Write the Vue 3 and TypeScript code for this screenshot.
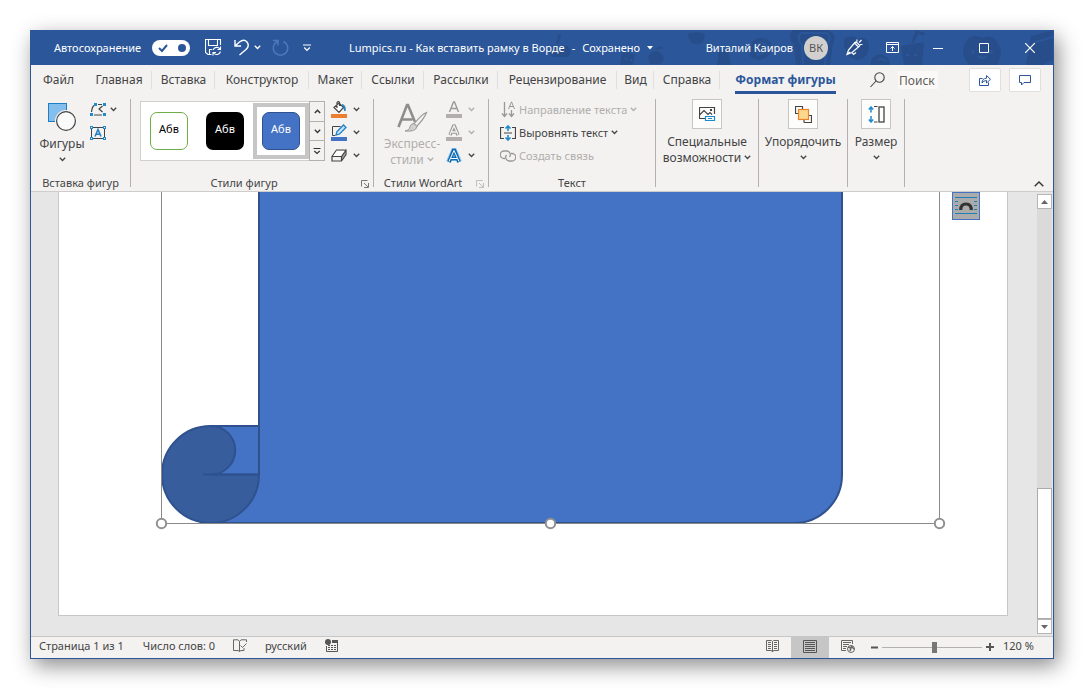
<script setup lang="ts">
import { h, ref } from 'vue'

interface Tab { id: string; label: string }

const tabs: Tab[] = [
  { id: 'file', label: 'Файл' },
  { id: 'home', label: 'Главная' },
  { id: 'insert', label: 'Вставка' },
  { id: 'design', label: 'Конструктор' },
  { id: 'layout', label: 'Макет' },
  { id: 'refs', label: 'Ссылки' },
  { id: 'mail', label: 'Рассылки' },
  { id: 'review', label: 'Рецензирование' },
  { id: 'view', label: 'Вид' },
  { id: 'help', label: 'Справка' },
  { id: 'format', label: 'Формат фигуры' },
]
const activeTab = ref('format')
const autosave = ref(true)
const query = ref('')
const zoom = ref(120)
const slider = ref(53)
const presets = ['outline', 'black', 'blue']
const preset = ref('blue')

const Chevron = () =>
  h('svg', { class: 'chev', width: 7, height: 5, viewBox: '0 0 7 5', 'aria-hidden': 'true' }, [
    h('path', { d: 'M0.8 0.8 L3.5 3.5 L6.2 0.8', fill: 'none', stroke: 'currentColor', 'stroke-width': 1.3 }),
  ])
const Launcher = () =>
  h('svg', { width: 8, height: 8, viewBox: '0 0 8 8', 'aria-hidden': 'true' }, [
    h('path', { d: 'M0.5 6.5 V0.5 H6.5 M3 3 L7 7 M7.5 3 V7.5 H3', fill: 'none', stroke: 'currentColor' }),
  ])
</script>

<template>
  <div class="stage">
    <main class="window">
      <header class="titlebar">
        <svg class="pattern" width="514" height="35" viewBox="540 30 514 35" aria-hidden="true">
          <g fill="#274e8b">
            <path d="M551 47 q5 -4 9 0 q5 -3 10 0 q3 6 -1 10 h-16 q-4 -5 -2 -10z M557 44 l2 -10 3 1 -2 9z" />
            <path d="M623 52 l13 2 -2 11 h-13z M652 53 q6 -5 11 1 q5 7 -3 10 h-8 q-5 -6 0 -11z M656 50 q3 -6 9 -2z" />
            <path d="M688 34 q9 -4 18 0 l-2 9 q-10 3 -13 -2z" />
            <path d="M753 42 q10 -9 19 1 q4 8 -6 15 q-12 5 -15 -3z" />
            <path d="M720 50 h9 l3 15 h-14z" />
            <path d="M793 30 h36 q10 5 5 14 l-3 21 h-34 l-2 -20 q-7 -8 -2 -15z" />
            <path d="M845 39 q8 -6 14 0 q9 -5 11 6 q0 13 -11 15 q-15 -2 -14 -21z" />
            <path d="M873 58 q7 -7 16 0 l2 7 h-20z M902 46 l23 -4 -2 23 h-18z M912 43 l5 -13 9 3 -1 3 -6 -2 -4 9z" />
            <path d="M970 38 q7 -4 13 0 q8 -4 14 2 q9 12 1 25 h-28 q-12 -15 0 -27z M1032 36 l22 -6 v30 l-10 5 h-17z" />
          </g>
          <g fill="none" stroke="#2b579a" stroke-width="2">
            <path d="M802 33 h25 q7 4 1 11 l-2 21 M804 65 l-1 -20 q-6 -7 -1 -12" />
            <path d="M756 46 q8 -6 12 0 q0 6 -9 9z M879 60 q4 -3 8 1" />
            <circle cx="974" cy="52" r="1" /><circle cx="992" cy="52" r="1" />
            <path d="M1034 43 l20 -6 M979 56 q4 4 8 0 M627 58 v2 M632 59 v2 M907 55 h3 M915 55 h3" />
          </g>
        </svg>
        <div class="quick">
          <label class="autosave">Автосохранение
            <span class="switch">
              <input v-model="autosave" type="checkbox" />
              <svg width="38" height="16" viewBox="0 0 38 16" aria-hidden="true">
                <path d="M7 8 l3 3 5 -6" fill="none" stroke="#2b579a" stroke-width="2" />
                <circle cx="30" cy="8" r="4" fill="#2b579a" />
              </svg>
            </span>
          </label>
          <button class="plain save" aria-label="Сохранить">
            <svg width="17" height="17" viewBox="0 0 17 17" fill="none" stroke="#fff" stroke-width="1.1">
              <path d="M6.5 15.5 H3 L0.5 13.5 V0.5 H15.5 V6 M3.5 1 V6.5 H12.5 V1 M4.500 15.500 V10.500 H7" />
              <path d="M8 11 A4 4 0 0 1 15 10 M15.500 7.500 V10.500 H12.500 M15.500 12.500 A4 4 0 0 1 8.500 14 M8 16.500 V13.500 H11" />
            </svg>
          </button>
          <button class="plain undo" aria-label="Отменить">
            <svg width="16" height="17" viewBox="0 0 16 17" fill="none" stroke="#fff" stroke-width="1.4">
              <path d="M1 1 V7 H7 M1.500 6.500 L5.500 3 Q10 -0.500 13 3 Q16 7 12 10.500 L5.500 16" />
            </svg>
            <Chevron />
          </button>
          <button class="plain redo" aria-label="Повторить">
            <svg width="17" height="17" viewBox="0 0 17 17" fill="none" stroke="#5079b8" stroke-width="1.4">
              <path d="M1 1.5 H6 V6.5 M5.5 2.5 A7.200 7.200 0 1 0 11.500 2.5" />
            </svg>
          </button>
          <button class="plain custom" aria-label="Настройка панели">
            <svg width="8" height="8" viewBox="0 0 8 8" fill="none" stroke="#fff" stroke-width="1.200">
              <path d="M0 1 H8 M1.2 3.5 L4 6.3 L6.8 3.5" />
            </svg>
          </button>
        </div>
        <button class="plain doc-title">
          <span>Lumpics.ru - Как вставить рамку в Ворде</span>
          <span>-</span>
          <span>Сохранено</span>
          <svg width="6" height="4" viewBox="0 0 6 4"><path d="M0 0 H6 L3 3.500Z" fill="#fff" /></svg>
        </button>
        <div class="account">
          <span>Виталий Каиров</span>
          <span class="avatar">ВК</span>
          <button class="plain pen" aria-label="Рисование">
            <svg width="17" height="17" viewBox="0 0 17 17" fill="none" stroke="#fff" stroke-width="1.200">
              <path d="M1 15.5 L2.5 11 L8.500 4 L12.500 8 L6 13.500 Z M1 15.500 L4 13 M8.500 4 L10 2.8 L13.800 6.500 L12.500 8 M6 13.500 L7.500 15.500 L10 13.500 M11 0.500 V2.500 M13 3.500 L15.500 1 M14 5.500 H16.500" />
            </svg>
          </button>
          <button class="plain cap" aria-label="Параметры ленты">
            <svg width="13" height="11" viewBox="0 0 13 11" fill="none" stroke="#fff"><path d="M0.500 0.500 H12.500 V10.500 H0.500Z M0.500 2.500 H12.500 M6.500 9 V4.500 M4.500 6.500 L6.500 4.500 L8.500 6.500" /></svg>
          </button>
          <button class="plain cap" aria-label="Свернуть">
            <svg width="10" height="10" viewBox="0 0 10 10"><path d="M0 5.500 H10" stroke="#fff" /></svg>
          </button>
          <button class="plain cap" aria-label="Развернуть">
            <svg width="10" height="10" viewBox="0 0 10 10"><path d="M0.500 0.500 H9.500 V9.500 H0.500Z" fill="none" stroke="#fff" /></svg>
          </button>
          <button class="plain cap" aria-label="Закрыть">
            <svg width="10" height="10" viewBox="0 0 10 10"><path d="M0 0 L10 10 M10 0 L0 10" stroke="#fff" stroke-width="1.200" /></svg>
          </button>
        </div>
      </header>

      <div class="tabrow">
        <nav class="tabs">
          <button v-for="t in tabs" :key="t.id" class="tab" :class="{ active: t.id === activeTab }" @click="activeTab = t.id">
            <span>{{ t.label }}</span>
          </button>
        </nav>
        <label class="search">
          <svg width="15" height="16" viewBox="0 0 15 16" fill="none" stroke="#444" stroke-width="1.100" aria-hidden="true">
            <circle cx="9.500" cy="5.500" r="4.700" /><path d="M6 9 L0.500 15" />
          </svg>
          <input v-model="query" type="text" placeholder="Поиск" aria-label="Поиск" />
        </label>
        <button class="boxed" aria-label="Поделиться">
          <svg width="12" height="12" viewBox="0 0 12 12" fill="none" stroke="#2b579a">
            <path d="M3.500 4.500 H0.500 V11.500 H9.500 V8.500 M3 9 Q3 4.500 7.500 4.200 V1.500 L11.500 5.300 L7.500 9 V6.500 Q4.500 6.500 3 9" />
          </svg>
        </button>
        <button class="boxed" aria-label="Примечания">
          <svg width="12" height="11" viewBox="0 0 12 11" fill="none" stroke="#2b579a"><path d="M0.500 0.500 H11.500 V7.500 H5 L2.500 10 V7.500 H0.500Z" /></svg>
        </button>
      </div>

      <div class="ribbon">
        <section class="group g-insert">
          <div class="body">
            <button class="big shapes">
              <svg width="28" height="30" viewBox="0 0 28 30">
                <rect x="0.500" y="1.500" width="18" height="18" fill="#83beec" stroke="#1e7fc4" />
                <circle cx="18" cy="19" r="11" fill="#f3f2f1" />
                <circle cx="18" cy="19" r="9.400" fill="#fafafa" stroke="#444" stroke-width="1.200" />
              </svg>
              <span>Фигуры</span>
              <Chevron />
            </button>
            <div class="rows">
              <button class="small" aria-label="Изменить фигуру">
                <svg width="16" height="14" viewBox="0 0 16 14">
                  <path d="M1.500 9 Q2 4 4 2.500 M8 1.500 H12 M12.500 3 L9 6 L12.500 9 M4 12 H12" fill="none" stroke="#444" stroke-width="1.200" />
                  <g fill="#1e8bcd"><rect x="4" y="0" width="3" height="3" /><rect x="13" y="0" width="3" height="3" /><rect x="0" y="10" width="3" height="3" /><rect x="13" y="10" width="3" height="3" /></g>
                </svg>
                <Chevron />
              </button>
              <button class="small" aria-label="Надпись">
                <svg width="16" height="14" viewBox="0 0 16 14">
                  <path d="M1.500 1.500 H14.500 V12.500 H1.500Z" fill="none" stroke="#444" />
                  <g fill="#f3f2f1" stroke="#1e8bcd"><rect x="0.500" y="0.500" width="2" height="2" /><rect x="13.500" y="0.500" width="2" height="2" /><rect x="0.500" y="11.500" width="2" height="2" /><rect x="13.500" y="11.500" width="2" height="2" /></g>
                  <path d="M5 10.500 L8 3.500 L11 10.500 M6 8.300 H10" fill="none" stroke="#1e7fc4" stroke-width="1.500" />
                </svg>
              </button>
            </div>
          </div>
          <footer>Вставка фигур</footer>
        </section>
        <i class="sep"></i>

        <section class="group g-styles">
          <div class="body">
            <div class="gallery">
              <button v-for="p in presets" :key="p" class="preset" :class="[p, { chosen: p === preset }]" @click="preset = p"><span>Абв</span></button>
            </div>
            <div class="scrollers">
              <button aria-label="Вверх"><svg width="7" height="5" viewBox="0 0 7 5"><path d="M0.800 4 L3.500 1.300 L6.200 4" fill="none" stroke="#333" stroke-width="1.400" /></svg></button>
              <button aria-label="Вниз"><Chevron /></button>
              <button aria-label="Ещё"><svg width="8" height="8" viewBox="0 0 8 8"><path d="M0.500 1.500 H7.500 M1.300 4 L4 6.500 L6.700 4" fill="none" stroke="#333" stroke-width="1.200" /></svg></button>
            </div>
            <div class="rows tools">
              <button class="small" aria-label="Заливка фигуры">
                <svg width="16" height="17" viewBox="0 0 16 17">
                  <path d="M3 6.500 L8 2 L12.500 6.500 L8 11.500 Z M6 7 V1.500 Q7.500 -0.500 8.500 1.500 V5" fill="#fff" stroke="#444" stroke-width="1.200" />
                  <path d="M11 3.500 Q15 4 14 10 L12.500 6.500" fill="#1e7fc4" stroke="#1e7fc4" />
                  <rect y="13" width="16" height="4" fill="#ed7d31" />
                </svg>
                <Chevron />
              </button>
              <button class="small" aria-label="Контур фигуры">
                <svg width="16" height="17" viewBox="0 0 16 17">
                  <path d="M9.500 2.500 H1.500 V11.500 H4" fill="none" stroke="#444" />
                  <path d="M5 11 L6 7.500 L12.500 1 L15 3.500 L8.500 10 Z" fill="#c5e2f6" stroke="#1e7fc4" stroke-width="1.300" />
                  <rect y="13" width="16" height="4" fill="#4472c4" />
                </svg>
                <Chevron />
              </button>
              <button class="small" aria-label="Эффекты фигуры">
                <svg width="16" height="13" viewBox="0 0 16 13">
                  <path d="M6 1 H15 L14.500 5 L10 12 V7.500 Z" fill="#999" />
                  <path d="M5.500 1 H15 L10.500 7.500 H1Z M1 7.500 V12 H10.500 L15 5.500 V1 M10.500 7.500 V12" fill="none" stroke="#444" stroke-width="1.200" />
                  <path d="M6 1.700 H13.800 L10 7 H2.300Z" fill="#fff" />
                </svg>
                <Chevron />
              </button>
            </div>
          </div>
          <footer>Стили фигур<button class="launch" aria-label="Параметры стилей фигур"><Launcher /></button></footer>
        </section>
        <i class="sep"></i>

        <section class="group g-wordart">
          <div class="body">
            <button class="big express" disabled>
              <svg width="31" height="30" viewBox="0 0 31 30">
                <path d="M1.500 24 L10 2 H11 L18 19 M4.500 16.500 H15.500" fill="none" stroke="#8e8e8e" stroke-width="2.600" />
                <path d="M29.500 9.500 Q25 11 17 21 L19.500 23.500 Q27 16 29.500 9.500Z" fill="#f3f2f1" stroke="#999" stroke-width="1.200" />
                <path d="M17 20.500 L20 23.500 Q19 29 8 28 Q13 27 13 23.500 Q14 20.500 17 20.500Z" fill="#d2d0ce" stroke="#999" />
              </svg>
              <span>Экспресс-<br />стили <Chevron /></span>
            </button>
            <div class="rows">
              <button class="small" disabled aria-label="Заливка текста">
                <svg width="16" height="17" viewBox="0 0 16 17"><path d="M3.500 11 L7.500 1 H8.500 L12.500 11 M5 7.500 H11" fill="none" stroke="#999" stroke-width="1.400" /><rect y="13" width="16" height="4" fill="#b1aeab" /></svg>
                <Chevron />
              </button>
              <button class="small" disabled aria-label="Контур текста">
                <svg width="16" height="17" viewBox="0 0 16 17"><path d="M4 11 L7.700 2 H8.300 L12 11 M5.500 8 H10.500" fill="none" stroke="#999" stroke-width="3.400" /><path d="M4 10.500 L8 1.800 L12 10.500 M5.500 8 H10.500" fill="none" stroke="#f3f2f1" stroke-width="1.300" /><rect y="13" width="16" height="4" fill="#b1aeab" /></svg>
                <Chevron />
              </button>
              <button class="small" aria-label="Эффекты текста">
                <svg width="16" height="16" viewBox="0 0 16 16"><path d="M2.500 14 L7.500 2.500 H8.500 L13.500 14 M4.500 10.500 H11.500" fill="none" stroke="#8bc3ec" stroke-width="5" /><path d="M3 14 L7.500 2.500 H8.500 L13 14 M4.500 10.500 H11.500" fill="none" stroke="#0f6ab4" stroke-width="3.600" /><path d="M3 13.500 L8 2.500 L13 13.500 M5 10.500 H11" fill="none" stroke="#fff" /></svg>
                <Chevron />
              </button>
            </div>
          </div>
          <footer>Стили WordArt<button class="launch" disabled aria-label="Параметры WordArt"><Launcher /></button></footer>
        </section>
        <i class="sep"></i>

        <section class="group g-text">
          <div class="rows body-rows">
            <button class="small wide" disabled>
              <svg width="16" height="17" viewBox="0 0 16 17" fill="none" stroke="#999"><path d="M4.500 1 V15 M2 12.500 L4.500 15.500 L7 12.500 M11.500 9 V15 M9 12.500 L11.500 15.500 L14 12.500" stroke-width="1.300" /><path d="M8.500 8 L11.500 0.800 L14.500 8 M9.500 5.500 H13.500" /></svg>
              <span>Направление текста</span><Chevron />
            </button>
            <button class="small wide">
              <svg width="16" height="16" viewBox="0 0 16 16" fill="none"><path d="M4 2.500 H0.500 V13.500 H4 M12 2.500 H15.500 V13.500 H12 M4 8 H12" stroke="#444" stroke-width="1.200" /><path d="M8 1 V6 M5.500 3.500 L8 1 L10.500 3.500 M8 10 V15 M5.500 12.500 L8 15 L10.500 12.500" stroke="#1e8bcd" stroke-width="1.600" /></svg>
              <span>Выровнять текст</span><Chevron />
            </button>
            <button class="small wide" disabled>
              <svg width="16" height="12" viewBox="0 0 16 12" fill="none" stroke="#999" stroke-width="1.300"><path d="M5 8.500 H4 A3.700 3.700 0 0 1 4 1 H7 A3.700 3.700 0 0 1 9.500 7 M11 3.500 H12 A3.700 3.700 0 0 1 12 11 H9 A3.700 3.700 0 0 1 6.500 5" /></svg>
              <span>Создать связь</span>
            </button>
          </div>
          <footer>Текст</footer>
        </section>
        <i class="sep"></i>

        <section class="group g-access">
          <button class="big tile">
            <i><svg width="17" height="16" viewBox="0 0 17 16" fill="none"><path d="M6 12.500 H0.500 V1.500 H15.500 V8 M1 8.500 L5 4.500 L9 8.500 L11 6.500 L13 8.500" stroke="#444" stroke-width="1.200" /><rect x="11" y="3" width="2" height="2" fill="#444" /><path d="M6.500 10.500 H15.500 V14.500 H6.500Z M9 12.500 H13" stroke="#1e8bcd" stroke-width="1.200" /></svg></i>
            <span>Специальные<br />возможности <Chevron /></span>
          </button>
        </section>
        <i class="sep"></i>
        <section class="group g-arrange">
          <button class="big tile">
            <i><svg width="17" height="17" viewBox="0 0 17 17" fill="none"><path d="M3 7.500 H0.500 V0.500 H7.500 V3 M9 16.500 H16.500 V9.500 H14 M9 14 V16.500" stroke="#444" stroke-width="1.200" /><rect x="3.500" y="3.500" width="10" height="10" fill="#fbd88d" stroke="#ee8128" stroke-width="1.200" /></svg></i>
            <span>Упорядочить</span><Chevron />
          </button>
        </section>
        <i class="sep"></i>
        <section class="group g-size">
          <button class="big tile">
            <i><svg width="17" height="17" viewBox="0 0 17 17" fill="none"><path d="M3 1 V6.500 M0.800 3.500 L3 1 L5.200 3.500 M3 10 V16 M0.800 13.500 L3 16 L5.200 13.500" stroke="#1e8bcd" stroke-width="1.500" /><path d="M6 0.500 H9.500 M6 16 H9.500" stroke="#444" /><rect x="11" y="1" width="5" height="15" stroke="#444" stroke-width="1.300" /></svg></i>
            <span>Размер</span><Chevron />
          </button>
        </section>
        <i class="sep"></i>
        <button class="plain collapse" aria-label="Свернуть ленту">
          <svg width="10" height="6" viewBox="0 0 10 6"><path d="M0.700 5.300 L5 1 L9.300 5.300" fill="none" stroke="#333" stroke-width="1.400" /></svg>
        </button>
      </div>

      <div class="workspace">
        <article class="page">
          <svg class="drawing" width="948" height="423" viewBox="59 192 948 423" role="img" aria-label="Свиток">
            <g stroke="#2f528f" stroke-width="2">
              <path d="M259 186 V426 H211 V523 H794 A48 48 0 0 0 842 475 V186 Z" fill="#4472c4" />
              <path d="M211 426 A24 24 0 0 1 211 474.500 H259 A48.500 48.500 0 1 1 211 426 Z" fill="#375d9c" />
              <path d="M259 186 V475 M203 474.500 H259" fill="none" />
            </g>
            <path d="M161.500 186 V523.500 H939.500 V186" fill="none" stroke="#8a8a8a" />
            <g fill="#fff" stroke="#919191" stroke-width="2">
              <circle cx="161.500" cy="523.500" r="4.700" /><circle cx="550.500" cy="523.500" r="4.700" /><circle cx="939.500" cy="523.500" r="4.700" />
            </g>
          </svg>
          <button class="wrap" aria-label="Параметры разметки">
            <svg width="22" height="18" viewBox="0 0 22 18" fill="none"><path d="M0 0.500 H22 M0 4.500 H3 M19 4.500 H22 M0 8.500 H3 M19 8.500 H22 M0 12.500 H3 M19 12.500 H22 M0 16.500 H22" stroke="#1e7fb8" /><path d="M5.700 13 Q5.700 7 11 7 Q16.300 7 16.300 13" stroke="#333" stroke-width="3.200" /></svg>
          </button>
        </article>
        <div class="vscroll">
          <button aria-label="Прокрутить вверх"><svg width="7" height="4" viewBox="0 0 7 4"><path d="M0 4 H7 L3.500 0Z" fill="#666" /></svg></button>
          <div class="track"><div class="thumb"></div></div>
          <button aria-label="Прокрутить вниз"><svg width="7" height="4" viewBox="0 0 7 4"><path d="M0 0 H7 L3.500 4Z" fill="#666" /></svg></button>
        </div>
      </div>

      <footer class="status">
        <div class="info">
          <button class="plain pages">Страница 1 из 1</button>
          <button class="plain words">Число слов: 0</button>
          <button class="plain proof" aria-label="Правописание">
            <svg width="14" height="13" viewBox="0 0 14 13" fill="none" stroke="#666"><path d="M6.500 12.500 V2.500 L5 0.800 H0.500 V11.500 H5 L6.500 12.500 L8 11.500 H11 V9 M6.500 2.500 L8 0.800 H13.500 V3 M7.500 6.500 L9.500 8.500 L13.500 4.500" /></svg>
          </button>
          <button class="plain lang">русский</button>
          <button class="plain" aria-label="Запись макроса">
            <svg width="14" height="13" viewBox="0 0 14 13"><circle cx="3" cy="3" r="3" fill="#555" /><path d="M7 1 H13 V4 H7Z" fill="#555" /><path d="M1.500 7 V12.500 H12.500 V4" fill="none" stroke="#555" /><path d="M3 6.500 H12 M3 8.500 H12 M3 10.500 H12" fill="none" stroke="#555" stroke-dasharray="2 1" /></svg>
          </button>
        </div>
        <div class="views">
          <button class="plain view" aria-label="Режим чтения">
            <svg width="13" height="13" viewBox="0 0 13 13" fill="none" stroke="#666"><path d="M6.500 1.500 L5.500 0.500 H0.500 V10.500 H5.500 L6.500 12 L7.500 10.500 H12.500 V0.500 H7.500 L6.500 1.500 V12 M2 2.500 H5 M2 4.500 H5 M2 6.500 H5 M2 8.500 H5 M8 2.500 H11 M8 4.500 H11 M8 6.500 H11 M8 8.500 H11" /></svg>
          </button>
          <button class="plain view on" aria-label="Разметка страницы">
            <svg width="14" height="13" viewBox="0 0 14 13" fill="none" stroke="#555"><path d="M0.500 0.500 H13.500 V12.500 H0.500Z M2 2.500 H12 M2 4.500 H12 M2 6.500 H12 M2 8.500 H12 M2 10.500 H12" /></svg>
          </button>
          <button class="plain view" aria-label="Веб-документ">
            <svg width="14" height="13" viewBox="0 0 14 13" fill="none" stroke="#666"><path d="M5 10.500 H0.500 V0.500 H11.500 V4 M2 2.500 H10 M2 4.500 H8 M2 6.500 H6 M2 8.500 H5" /><circle cx="10" cy="9" r="3.500" fill="#f3f2f1" /><path d="M7 7 L10 8 L9 11 M10 5.500 L12 8 L13 9" stroke-width="1.500" /></svg>
          </button>
          <button class="plain step" aria-label="Уменьшить"><svg width="7" height="7" viewBox="0 0 7 7"><path d="M0 3.500 H7" stroke="#555" stroke-width="2" /></svg></button>
          <input v-model="slider" class="zoom" type="range" min="0" max="100" aria-label="Масштаб" />
          <button class="plain step" aria-label="Увеличить"><svg width="8" height="8" viewBox="0 0 8 8"><path d="M0 4 H8 M4 0 V8" stroke="#555" stroke-width="2" /></svg></button>
          <button class="plain percent">{{ zoom }} %</button>
        </div>
      </footer>
    </main>
  </div>
</template>

<style>
body { background: #fff; }
</style>

<style scoped>
.stage { box-sizing: border-box; min-height: 100vh; padding: 30px; display: flex; font-family: "Noto Sans", "Open Sans", sans-serif; font-size: 12px; color: #444; }
.stage *, .stage *::before { box-sizing: border-box; }
.window { flex: 1; min-width: 0; display: flex; flex-direction: column; background: #f3f2f1; border: 1px solid #2b579a; border-top: 0; box-shadow: 4px 7px 20px rgba(0, 0, 0, 0.45); }
button { font: inherit; color: inherit; margin: 0; padding: 0; border: 0; background: none; }
svg { display: block; flex: none; }
.plain { display: flex; align-items: center; justify-content: center; white-space: nowrap; }

.titlebar { position: relative; display: flex; align-items: center; height: 35px; background: #2b579a; color: #fff; font-size: 11px; }
.pattern { position: absolute; right: 0; top: 0; }
.quick { position: relative; display: flex; align-items: center; width: 318px; padding-left: 23px; }
.autosave { display: flex; align-items: center; justify-content: space-between; width: 136px; white-space: nowrap; }
.switch { display: flex; background: #fff; border-radius: 8px; }
.switch input { position: absolute; opacity: 0; margin: 0; }
.save { margin-left: 15px; }
.undo { margin-left: 12px; gap: 4px; }
.redo { margin-left: 11px; }
.custom { margin-left: 14px; }
.doc-title { position: relative; gap: 7px; }
.account { position: relative; margin-left: auto; display: flex; align-items: center; white-space: nowrap; }
.avatar { width: 24px; height: 24px; margin-left: 11px; border-radius: 50%; background: #d2d0ce; color: #555; font-size: 11px; line-height: 24px; text-align: center; }
.pen { width: 30px; margin-left: 11px; }
.cap { width: 46px; height: 34px; }

.tabrow { display: flex; align-items: center; height: 30px; font-size: 12px; }
.tabs { display: grid; grid-template-columns: 55px 66px 63px 94px 53px 62px 74px 119px 37px 66px 131px; height: 30px; }
.tab { display: flex; align-items: center; justify-content: center; white-space: nowrap; background: linear-gradient(#e1dfdd, #e1dfdd) right 6px / 1px 18px no-repeat; }
.tab:first-child, .tab:last-child { background: none; }
.tab span { line-height: 22px; padding-top: 3px; border-bottom: 3px solid transparent; }
.tab.active span { color: #2b579a; font-weight: 700; border-bottom-color: #2b579a; }
.search { display: flex; align-items: center; margin-left: auto; }
.search input { width: 40px; height: 18px; margin-left: 13px; margin-right: 31px; border: 0; padding: 0 0 0 1px; background: #faf9f8; font: inherit; color: #555; }
.search input::placeholder { color: #605e5c; opacity: 1; }
.boxed { display: flex; align-items: center; justify-content: center; width: 32px; height: 24px; background: #fff; border: 1px solid #e1dfdd; border-radius: 2px; margin-right: 8px; }
.boxed:last-child { margin-right: 12px; }

.ribbon { display: flex; height: 97px; padding-top: 3px; border-bottom: 1px solid #cfcdcb; position: relative; z-index: 1; }
.group { display: flex; flex-direction: column; height: 93px; }
.sep { width: 1px; height: 88px; margin-top: 1px; background: #b3b0ad; }
.body { display: flex; }
.group > footer { position: relative; margin-top: auto; height: 16px; line-height: 16px; font-size: 11px; text-align: center; white-space: nowrap; }
.launch { position: absolute; right: 4px; top: 5px; color: #777; }
.launch:disabled { color: #c0bdba; }
.g-insert { width: 99px; }
.g-styles { width: 242px; }
.g-wordart { width: 114px; }
.g-text { width: 166px; }
.g-access { width: 102px; }
.g-arrange { width: 88px; }
.g-size { width: 56px; }
.g-styles footer { padding-right: 16px; }
.g-wordart footer { padding-right: 16px; }
.big { display: flex; flex-direction: column; align-items: center; line-height: 16px; white-space: nowrap; }
.big .chev { margin-top: 5px; }
.big span .chev { display: inline-block; vertical-align: 2px; margin: 0; }
button:disabled { color: #b1aeab; }
.shapes { width: 56px; margin-left: 3px; padding-top: 4px; gap: 4px; }
.shapes .chev { margin-top: 1px; }
.rows { display: flex; flex-direction: column; }
.small { display: flex; align-items: center; gap: 4px; height: 23px; white-space: nowrap; }
.tools { margin-left: 6px; }
.tools .small, .g-wordart .small { gap: 6px; }
.express { width: 62px; margin-left: 7px; margin-right: 3px; padding-top: 5px; gap: 3px; }
.body-rows { padding-left: 11px; font-size: 11px; }
.wide { gap: 3px; }
.tile { width: 100%; padding-top: 1px; }
.tile i { display: flex; align-items: center; justify-content: center; width: 30px; height: 30px; margin-bottom: 5px; background: #fdfdfc; border: 1px solid #c8c6c4; }
.gallery { display: flex; height: 60px; margin: 3px 0 0 9px; background: #fff; border: 1px solid #d2d0ce; border-right: 0; }
.preset { width: 56px; height: 56px; margin-top: 1px; display: flex; align-items: center; justify-content: center; }
.preset span { width: 38px; height: 38px; border-radius: 7px; line-height: 32px; font-size: 11px; color: #000; }
.outline span { border: 1px solid #70ad47; }
.black span { background: #000; color: #fff; line-height: 34px; }
.blue span { background: #4472c4; border: 1px solid #2f528f; color: #fff; }
.chosen { border: 4px solid #c6c6c6; }
.scrollers { display: flex; flex-direction: column; width: 16px; height: 60px; margin-top: 3px; }
.scrollers button { flex: 1; display: flex; align-items: center; justify-content: center; border: 1px solid #b3b0ad; border-top-width: 0; color: #333; }
.scrollers button:first-child { border-top-width: 1px; }
.collapse { margin: auto 9px 4px auto; }

.workspace { flex: 1; display: flex; background: #e6e6e6; }
.page { position: relative; flex: 1; margin: 0 29px 20px 27px; background: #fff; border: 1px solid #c6c6c6; border-top: 0; display: flex; justify-content: center; align-items: flex-start; }
.wrap { position: absolute; top: 0; right: 27px; width: 28px; height: 28px; display: flex; align-items: center; justify-content: center; background: #ababab; border: 1px solid #4472c4; }
.vscroll { display: flex; flex-direction: column; width: 15px; margin: 2px 1px 2px 0; }
.vscroll button { display: flex; align-items: center; justify-content: center; width: 15px; height: 15px; background: #fff; border: 1px solid #b5b5b5; }
.track { flex: 1; display: flex; flex-direction: column; justify-content: flex-end; background: #dadada; }
.thumb { height: 32%; background: #fff; border: 1px solid #ababab; }

.status { display: flex; align-items: flex-start; justify-content: space-between; height: 22px; border-top: 1px solid #c6c6c6; font-size: 11px; padding-left: 8px; }
.info { display: flex; align-items: center; height: 17px; }
.words { margin-left: 19px; }
.proof { margin-left: 18px; }
.lang { margin: 0 18px 0 18px; }
.views { display: flex; align-items: center; height: 21px; }
.view, .step { height: 21px; padding-bottom: 2px; }
.view { width: 38px; }
.view.on { background: #c6c6c6; }
.step { width: 14px; padding-bottom: 1px; }
.zoom { appearance: none; width: 102px; height: 20px; margin: 0; padding: 0 1px; background: none; }
.zoom::-webkit-slider-runnable-track { height: 11px; background: linear-gradient(#b3b0ad, #b3b0ad) center / 100% 1px no-repeat; }
.zoom::-webkit-slider-thumb { appearance: none; width: 5px; height: 11px; background: #777; }
.percent { width: 50px; height: 21px; padding-bottom: 4px; justify-content: flex-start; margin-left: 6px; }
</style>
